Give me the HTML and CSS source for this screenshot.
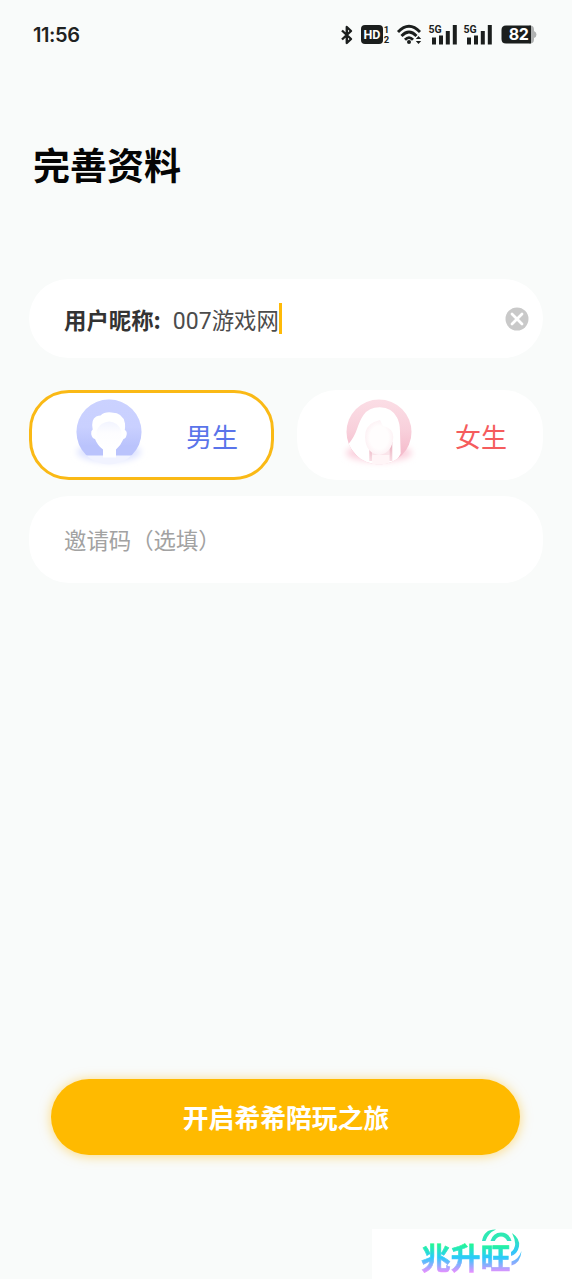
FILE: index.html
```html
<!DOCTYPE html>
<html lang="zh-CN">
<head>
<meta charset="utf-8">
<title>完善资料</title>
<link rel="stylesheet" href="styles.css">
</head>
<body>
<div class="screen">
  <header class="status">
    <span class="time">11:56</span>
    <div class="status-icons">
      <svg class="bt" width="14" height="20" viewBox="0 0 14 20"><path d="M2 5.500 11 14 6.800 18V2L11 6 2 14.500" fill="none" stroke="#1b1e1d" stroke-width="2.400" stroke-linejoin="round"/></svg>
      <svg class="hd" width="30" height="22" viewBox="0 0 30 22"><rect x="0" y="1" width="22" height="19" rx="4" fill="#1b1e1d"/><text x="11" y="15.200" class="hd-text">HD</text><text x="25.500" y="9" class="sim-text">1</text><text x="25.500" y="18.500" class="sim-text">2</text></svg>
      <svg class="wifi" width="26" height="22" viewBox="0 0 26 22"><g fill="none" stroke="#1b1e1d" stroke-width="2.800"><path d="M1 8Q12-3.500 23 8"/><path d="M4.500 12Q12 4 19.500 12"/><path d="M8 15.700Q12 11.500 16 15.700"/></g><circle cx="12" cy="18" r="2" fill="#1b1e1d"/><path d="m18.800 15 2.700-3 2.700 3zm0 2 2.700 3 2.700-3z" fill="#1b1e1d"/></svg>
      <svg class="signal" width="29" height="22" viewBox="0 0 29 22"><text x="-.5" y="8.500" class="net-text">5G</text><path d="M3 13.500h4v7H3zM10 11.500h4v9h-4zM16.800 7h4v13.500h-4zM23.800 1h4v19.500h-4z" fill="#1b1e1d"/></svg>
      <svg class="signal" width="29" height="22" viewBox="0 0 29 22"><text x="-.5" y="8.500" class="net-text">5G</text><path d="M3 13.500h4v7H3zM10 11.500h4v9h-4zM16.800 7h4v13.500h-4zM23.800 1h4v19.500h-4z" fill="#1b1e1d"/></svg>
      <svg class="battery" width="36" height="22" viewBox="0 0 36 22"><path d="M28 1.500h1q4 0 4 4V7q2.500 1 2.500 3.500T33 14v1.500q0 4-4 4h-1z" fill="#b0b2b2"/><path d="M5 1.500h25v18H5Q.5 19.500.5 15V6Q.5 1.500 5 1.500z" fill="#1b1e1d"/><text x="17.500" y="16.300" class="battery-text">82</text></svg>
    </div>
  </header>

  <h1 class="title">完善资料</h1>

  <main class="form">
    <div class="field nickname">
      <span class="label">用户昵称:</span>
      <span class="value"><span class="digits">007</span>游戏网</span>
      <i class="caret"></i>
      <svg class="clear" width="24" height="24" viewBox="0 0 24 24"><circle cx="12" cy="12" r="11.500" fill="#c9c9c9"/><path d="m7 7 10 10m0-10L7 17" stroke="#fff" stroke-width="2.800" stroke-linecap="round"/></svg>
    </div>

    <div class="genders">
      <div class="gender male">
        <svg class="avatar" width="80" height="80" viewBox="0 0 80 80">
          <defs>
            <linearGradient id="blue" x2="0" y2="1"><stop stop-color="#cbd2ff"/><stop offset=".55" stop-color="#c9d0ff"/><stop offset=".85" stop-color="#bac3fc"/></linearGradient>
            <linearGradient id="face" x2="0" y2="1"><stop stop-color="#f2f4ff"/><stop offset=".4" stop-color="#fdfdff"/><stop offset="1" stop-color="#fff"/></linearGradient>
            <clipPath id="disc"><circle cx="40" cy="40" r="32.500"/></clipPath>
            <filter id="soft" x="-30%" y="-60%" width="160%" height="220%"><feGaussianBlur stdDeviation="3"/></filter>
          </defs>
          <ellipse cx="40" cy="60" rx="32" ry="10" fill="#dfe4ff" filter="url(#soft)"/>
          <g clip-path="url(#disc)">
            <path d="M0 0h80v80H0z" fill="#f1f3ff"/>
            <path d="M0 0h80v63.500H0z" fill="url(#blue)"/>
            <path d="M26 47q-3-.5-3.800-5-.4-3.500 1.500-4.500-2-10 3.500-13 2.500-.8 4.300-1 4-3.800 11-3 12 .4 13.500 11 .3 3-.2 6.500 2.400 1.200 1.900 4.500-.7 4-3.200 4.500-2.500 6-7.500 10.500v8H34v-8q-5.500-4-8-10.500z" fill="#fff"/>
          </g>
          <path d="M27.500 40q.5-4 5-8 8-5 15 0 4.500 4 5 8 0 13-12.500 18-12.500-5-12.500-18z" fill="url(#face)"/>
        </svg>
        <span>男生</span>
      </div>
      <div class="gender female">
        <svg class="avatar" width="80" height="80" viewBox="0 0 80 80">
          <defs>
            <linearGradient id="pink" x2="0" y2="1"><stop offset=".1" stop-color="#fbdde5"/><stop offset=".48" stop-color="#f8d0db"/><stop offset=".75" stop-color="#f5bdcd"/></linearGradient>
            <radialGradient id="girl"><stop offset=".65" stop-color="#fffdfd"/><stop offset="1" stop-color="#fdf2f5"/></radialGradient>
            <linearGradient id="neck" x2="0" y2="1"><stop stop-color="#e6a9b8"/><stop offset="1" stop-color="#f9dfe6"/></linearGradient>
          </defs>
          <ellipse cx="40" cy="61" rx="33" ry="9" fill="#fbd3df" filter="url(#soft)"/>
          <g clip-path="url(#disc)">
            <path d="M0 0h80v80H0z" fill="url(#pink)"/>
            <path d="M9 52.500Q15 46 18 37t6.500-14Q30 15 41 15.200q12 .3 17 10.300 3.200 6 3 15l.7 21Q54 77 40 77T9 52.500z" fill="#fff"/>
            <path d="M30.300 50h3v19h-3zM50.300 50h3v19h-3z" fill="url(#neck)"/>
            <path d="M33.300 58h17v6h-17z" fill="#fae4ea"/>
            <path d="M33.300 63h17v12h-17z" fill="#fff5f7"/>
          </g>
          <path d="M26 45q0-11 9-15l6-2 3 6q10 2 10.300 11Q53.500 61 40 63 26.500 61 26 45z" fill="url(#girl)"/>
        </svg>
        <span>女生</span>
      </div>
    </div>

    <div class="field invite">邀请码（选填）</div>
  </main>

  <button class="submit">开启希希陪玩之旅</button>

  <div class="watermark">
    <span class="brand">兆升旺</span>
    <svg class="rings" width="44" height="40" viewBox="0 0 44 40"><defs><linearGradient id="ring" gradientUnits="userSpaceOnUse" x1="0" y1="8" x2="0" y2="38"><stop stop-color="#2ee9b3"/><stop offset=".5" stop-color="#30c7fa"/><stop offset="1" stop-color="#a9a2ff"/></linearGradient></defs><g fill="url(#ring)"><path d="M2 12Q4 0 16 .5 8 4 5.500 12z"/><path d="M10.500 12Q13 3.500 21 3.500T31.500 12h-4.300q-2-4.500-6.200-4.500t-6.200 4.500z"/><path d="M32 4q8.500 6 7 13.500-1.500 7.500-8 9.500v-4q4-3 4.200-8Q35 10 32 4z"/><path d="M41.500 22q-1 12-10 14.500v-4q7-2 10-10.500z"/></g></svg>
  </div>
</div>
</body>
</html>
```
FILE: styles.css
```css
* { box-sizing: border-box; }
body {
  margin: 0;
  background: #f9fbfa;
  font-family: "Noto Sans CJK SC", sans-serif;
}
.screen {
  width: 572px;
  height: 1279px;
  display: flex;
  flex-direction: column;
  overflow: hidden;
}
.status {
  height: 70px;
  flex: none;
  padding: 0 35px 0 33px;
  display: flex;
  align-items: center;
  justify-content: space-between;
}
.time { font: 600 20px/24px Inter, sans-serif; color: #1f2221; letter-spacing: -.4px; }
.status-icons { display: flex; align-items: center; }
.status-icons svg { display: block; flex: none; overflow: visible; }
.bt { margin-right: 7px; }
.hd { margin-right: 6px; }
.wifi { margin-right: 6px; }
.signal { margin-right: 6px; }
.signal + .battery { margin-left: 2px; }
.hd-text { font: 700 12.500px Roboto, sans-serif; fill: #fff; text-anchor: middle; }
.sim-text { font: 700 9.500px Roboto, sans-serif; fill: #1b1e1d; text-anchor: middle; }
.net-text { font: 700 10.500px Roboto, sans-serif; fill: #1b1e1d; }
.battery-text { font: 700 16px Inter, sans-serif; fill: #fff; text-anchor: middle; letter-spacing: -.5px; }
.title {
  margin: 66px 0 0 33px;
  height: 57px;
  font-size: 37px;
  line-height: 56px;
  font-weight: 700;
  color: #050505;
}
.form {
  margin: 86px 29px 0;
  display: flex;
  flex-direction: column;
}
.field {
  display: flex;
  align-items: center;
  background: #fff;
  border-radius: 40px;
  padding: 0 14px 0 35px;
  font-size: 22.400px;
}
.nickname { height: 79px; }
.label { font-weight: 700; color: #333; margin-right: 12px; }
.value { color: #4c4c4c; font-weight: 400; }
.digits { font-family: Roboto, sans-serif; font-size: 23px; }
.caret { width: 3px; height: 31px; background: #ffba08; }
.clear { margin-left: auto; }
.genders {
  margin: 32px 0 16px;
  display: flex;
  justify-content: space-between;
}
.gender {
  height: 90px;
  background: #fff;
  border-radius: 40px;
  display: flex;
  align-items: center;
  font-size: 26px;
  font-weight: 400;
}
.gender span { margin-left: 37px; }
.male { width: 245px; border: 3px solid #fab915; padding-left: 37px; color: #5a74ea; }
.female { width: 246px; padding-left: 42px; color: #f55c5d; }
.female span { margin-left: 36px; }
.avatar { flex: none; margin-top: -6px; }
.invite { height: 87px; color: #a2a2a2; font-weight: 400; padding-bottom: 1px; }
.submit {
  width: 469px;
  height: 76px;
  flex: none;
  margin: 496px 0 0 51px;
  border: 0;
  border-radius: 38px;
  background: #ffba00;
  box-shadow: 0 1px 12px rgba(255, 186, 0, .5);
  color: #fff;
  font: 700 25.800px/76px "Noto Sans CJK SC", sans-serif;
  padding: 0 0 0 1px;
}
.watermark {
  position: relative;
  width: 200px;
  height: 50px;
  flex: none;
  margin: auto 0 0 372px;
  padding-left: 49px;
  background: #fff;
}
.brand {
  display: block;
  width: 92px;
  padding-top: 6px;
  font-size: 29.800px;
  line-height: 43px;
  font-weight: 700;
  background: linear-gradient(#22fa91 30%, #2acbfb 58%, #f18dff 90%);
  -webkit-background-clip: text;
  background-clip: text;
  -webkit-text-stroke: .6px transparent;
  color: transparent;
}
.rings { position: absolute; left: 108px; top: 0; }
```
